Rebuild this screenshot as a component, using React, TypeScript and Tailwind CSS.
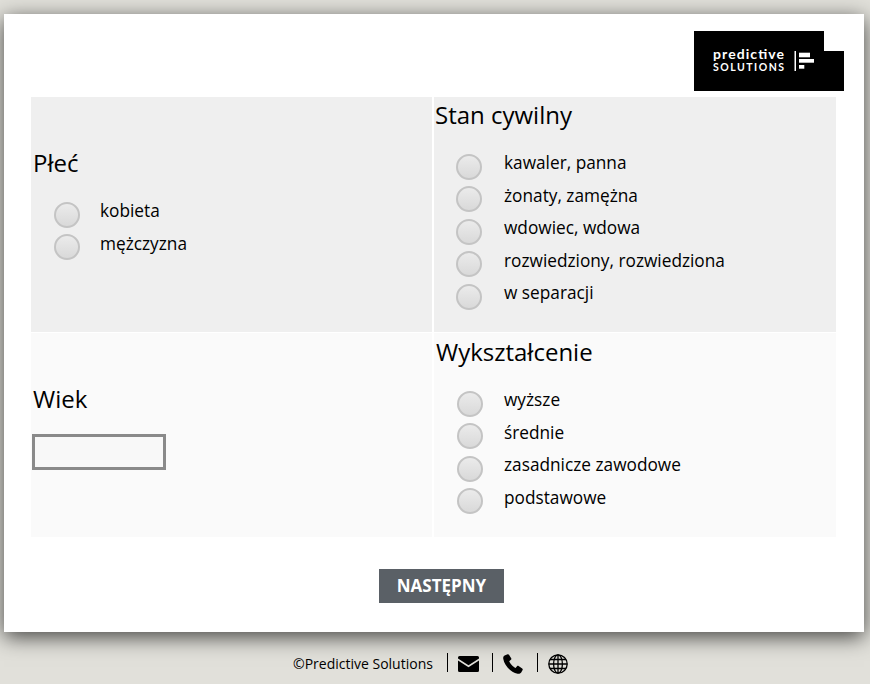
import React from 'react';

const font = { fontFamily: '"Open Sans", "Noto Sans", sans-serif' };

// --- ICON COMPONENTS ---
const Logo = () => (
  <svg width="150" height="60" viewBox="0 0 150 60">
    <path d="M0 0H130V20H150V60H0Z" fill="#000" />
    <text x="19" y="27.5" fill="#fff" fontSize="14" fontWeight="700" fontFamily="Lato, sans-serif" textLength="71">predictive</text>
    <text x="19" y="39.7" fill="#fff" fontSize="10.5" fontWeight="700" fontFamily="Lato, sans-serif" textLength="71">SOLUTIONS</text>
    <rect x="100.5" y="20" width="1.5" height="20" fill="#fff" />
    <rect x="105" y="21.7" width="11" height="4.6" fill="#fff" />
    <rect x="105" y="28" width="15" height="3.7" fill="#fff" />
    <rect x="105" y="34" width="5.3" height="3.7" fill="#fff" />
  </svg>
);

const MailIcon = () => (
  <svg width="21" height="16" viewBox="0 0 21 16">
    <path d="M1.5 0H19.5A1.5 1.5 0 0 1 21 1.5V2.6L10.5 9.2 0 2.6V1.5A1.5 1.5 0 0 1 1.5 0Z" fill="#000" />
    <path d="M0 4.6L10.5 11.2 21 4.6V14.5A1.5 1.5 0 0 1 19.5 16H1.5A1.5 1.5 0 0 1 0 14.5Z" fill="#000" />
  </svg>
);

const PhoneIcon = () => (
  <svg width="20" height="20" viewBox="0 0 20 20">
    <path d="M4.6 0.3 L1.6 1.6 C0.4 2.2 0 3.4 0.3 5 C1.4 11.5 7.8 18.4 14.6 19.7 C16 20 17.4 19.6 18.2 18.4 L19.6 16 C19.9 15.4 19.8 14.9 19.2 14.5 L15.6 12 C15 11.6 14.5 11.7 14 12.2 L12.6 13.9 C10.2 13 6.8 9.2 6.2 7.2 L7.9 5.8 C8.4 5.4 8.5 4.9 8.2 4.3 L6 0.8 C5.7 0.3 5.2 0.1 4.6 0.3Z" fill="#000" />
  </svg>
);

const GlobeIcon = () => (
  <svg width="20" height="20" viewBox="0 0 20 20" fill="none" stroke="#000" strokeWidth="1.3">
    <circle cx="10" cy="10" r="9.2" />
    <ellipse cx="10" cy="10" rx="4.4" ry="9.2" />
    <path d="M10 0.8V19.2M0.8 10H19.2M2 5.5H18M2 14.5H18" />
  </svg>
);
// --- END ICON COMPONENTS ---

const Radio = ({ name, label, labelClass }: { name: string; label: string; labelClass: string }) => (
  <label className="flex h-[32.5px] items-start">
    <input
      type="radio"
      name={name}
      className="ml-[21px] mt-[4.5px] h-[26px] w-[26px] shrink-0 appearance-none rounded-full border-2 border-[#c4c4c4] bg-gradient-to-b from-[#ebebeb] to-[#d9d9d9]"
    />
    <span className={`text-[17.25px] leading-[24px] text-black ${labelClass}`}>{label}</span>
  </label>
);

const Options = ({ name, items, labelClass }: { name: string; items: string[]; labelClass: string }) => (
  <div>
    {items.map((item) => (
      <Radio key={item} name={name} label={item} labelClass={labelClass} />
    ))}
  </div>
);

export default function App() {
  return (
    <div className="flex h-[684px] w-[870px] flex-col overflow-hidden bg-[#e1e0da]" style={font}>
      <div className="mx-[4px] mt-[14px] h-[618px] w-[860px] shrink-0 bg-white px-[27px] pt-[17px] shadow-[0_5px_20px_rgba(0,0,0,0.7)]">
        {/* Logo */}
        <div className="flex h-[66px] justify-end">
          <div className="-mr-[7px]">
            <Logo />
          </div>
        </div>

        {/* Form grid */}
        <div className="grid grid-cols-[401px_402px] grid-rows-[235px_204px] gap-x-[2px] gap-y-[1px]">
          <div className="flex flex-col justify-center bg-[#efefef] pb-[21px] pl-[2px]">
            <h2 className="mb-[18px] text-[24px] leading-[33px] text-black">Płeć</h2>
            <Options name="plec" items={['kobieta', 'mężczyzna']} labelClass="ml-[20px] mt-[2px]" />
          </div>
          <div className="bg-[#efefef] pl-[1px] pt-[1px]">
            <h2 className="mb-[18px] text-[24px] leading-[33px] text-black">Stan cywilny</h2>
            <Options
              name="stan"
              items={['kawaler, panna', 'żonaty, zamężna', 'wdowiec, wdowa', 'rozwiedziony, rozwiedziona', 'w separacji']}
              labelClass="ml-[22px] mt-[2px]"
            />
          </div>
          <div className="flex flex-col justify-center bg-[#fafafa] pb-[18px] pl-[2px]">
            <h2 className="mb-[19px] text-[24px] leading-[33px] text-black">Wiek</h2>
            <input type="text" className="-ml-px h-[36px] w-[134px] border-[3px] border-[#8a8a8a] bg-[#f8f8f8]" />
          </div>
          <div className="bg-[#fafafa] pl-[2px] pt-[2px]">
            <h2 className="mb-[18px] text-[24px] leading-[33px] text-black">Wykształcenie</h2>
            <Options name="wyksztalcenie" items={['wyższe', 'średnie', 'zasadnicze zawodowe', 'podstawowe']} labelClass="ml-[21px] mt-[2px]" />
          </div>
        </div>

        {/* Submit */}
        <div className="mt-[32px] flex justify-center pl-[15px]">
          <button className="h-[34px] w-[125px] bg-[#5a6066] text-[17px] font-bold text-white">NASTĘPNY</button>
        </div>
      </div>

      {/* Footer */}
      <div className="mt-[21px] flex h-[19px] items-center pl-[293px]">
        <span className="mt-[2px] w-[154px] text-[14px] leading-[19px] text-black">©Predictive Solutions</span>
        <div className="flex h-[19px] w-[45px] items-center border-l border-black pl-[10px] pt-[2px]"><MailIcon /></div>
        <div className="flex h-[19px] w-[45px] items-center border-l border-black pl-[10px] pt-[2px]"><PhoneIcon /></div>
        <div className="flex h-[19px] w-[45px] items-center border-l border-black pl-[10px] pt-[2px]"><GlobeIcon /></div>
      </div>
    </div>
  );
}
